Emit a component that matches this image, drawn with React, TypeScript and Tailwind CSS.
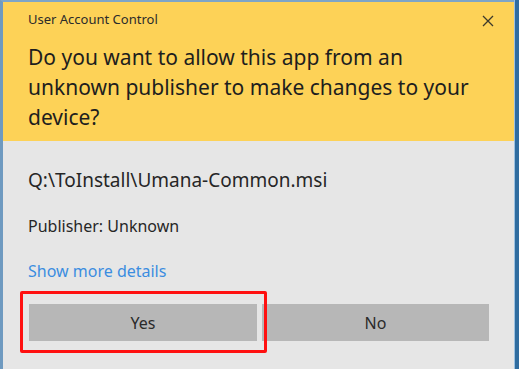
import React from "react";

export default function App() {
  const font = { fontFamily: '"Segoe UI", "Noto Sans", "Open Sans", sans-serif' };
  return (
    <div className="w-[520px] h-[369px] flex bg-[#e6e6e6] overflow-hidden" style={font}>
      <div className="flex-1 flex flex-col border-l-[3px] border-t-2 border-l-[#6f9ac0] border-t-[#7ea5c7]">
        <div className="h-[139px] bg-[#fdd257] flex flex-col px-[25px] relative">
          <div className="mt-[9px] h-4 text-[13px] leading-4 text-[#2b2b2b]">User Account Control</div>
          <button className="absolute right-[18px] top-[11px] w-4 h-4 flex items-center justify-center text-[#3a3a3a]">
            <svg width="12" height="12" viewBox="0 0 12 12">
              <path d="M1 1 L11 11 M11 1 L1 11" stroke="#3d3a2c" strokeWidth="1.3" />
            </svg>
          </button>
          <div className="mt-[15px] text-[21px] leading-[30px] text-[#1e1e1e]">
            Do you want to allow this app from an unknown publisher to make changes to your device?
          </div>
        </div>
        <div className="flex flex-col px-[25px]">
          <div className="mt-[27px] h-6 text-[19px] leading-6 text-[#262626]">Q:\ToInstall\Umana-Common.msi</div>
          <div className="mt-6 h-5 text-[16px] leading-5 text-[#262626]">Publisher: Unknown</div>
          <div className="mt-[25px] h-5 text-[16px] leading-5 text-[#3b8de0]">Show more details</div>
          <div className="mt-[23px] flex gap-[5px] pl-[1px]">
            <div className="relative w-[228px] h-[37px]">
              <div className="absolute -left-[9px] -top-[13px] -right-[10px] -bottom-[12px] border-[3px] border-[#ff1010] rounded-[2px]" />
              <div className="w-full h-full bg-[#b7b7b7] flex items-center justify-center text-[16px] text-[#2a2a2a]">Yes</div>
            </div>
            <div className="w-[227px] h-[37px] bg-[#b7b7b7] flex items-center justify-center text-[16px] text-[#2a2a2a]">No</div>
          </div>
        </div>
      </div>
      <div className="w-[5px] h-full flex">
        <div className="w-[1px] bg-[#9cc2e2]" />
        <div className="flex-1 bg-[#2f6c9f]" />
      </div>
      <div className="w-[1px] h-full bg-white" />
    </div>
  );
}
